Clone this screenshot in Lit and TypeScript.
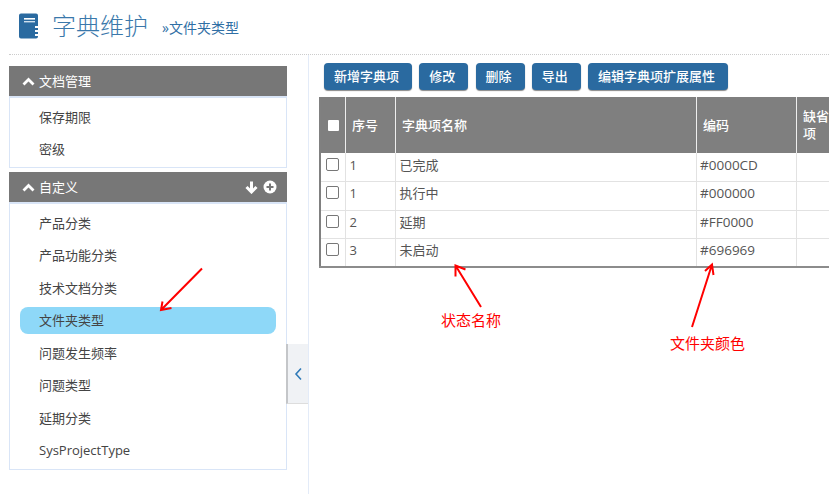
import { LitElement, html, css, svg, unsafeCSS } from "lit";
import { customElement } from "lit/decorators.js";

const FONT = unsafeCSS(`"Open Sans", "Noto Sans CJK SC", sans-serif`);

const chevUp = html`<svg class="chev" viewBox="0 0 13 9" width="13" height="9"><path d="M1.5 7.5 L6.5 2.5 L11.5 7.5" fill="none" stroke="#fff" stroke-width="2.8"/></svg>`;

const rows = [
  ["1", "已完成", "#0000CD"],
  ["1", "执行中", "#000000"],
  ["2", "延期", "#FF0000"],
  ["3", "未启动", "#696969"],
];

@customElement("app-root")
export class AppRoot extends LitElement {
  static styles = css`
    :host { display: block; width: 829px; height: 494px; overflow: hidden; position: relative; background: #fff; font-family: ${FONT}; font-size: 13px; color: #444; }
    .head { height: 55px; box-sizing: border-box; margin-left: 9px; display: flex; align-items: flex-start; border-bottom: 1px dotted #ccc; position: relative; }
    .logo { position: absolute; left: 10px; top: 12.5px; }
    .title { margin-left: 43px; margin-top: 8px; font-size: 24px; line-height: 36px; color: #3a78ab; font-weight: 300; }
    .sub { margin-left: 14px; margin-top: 16px; font-size: 14px; line-height: 24px; color: #2f6fa5; }
    .main { display: flex; height: 439px; }
    .side { width: 309px; box-sizing: border-box; border-right: 1px solid #e3ebf8; padding: 11px 21px 0 9px; flex: none; position: relative; }
    .phead { height: 30px; background: #777; color: #fff; display: flex; align-items: center; padding: 0 10px 0 13px; line-height: 20px; }
    .chev { margin-right: 4px; }
    .spacer { flex: 1; }
    .tools { display: flex; gap: 5px; align-items: center; }
    .pbody { border: 1px solid #d9e5f7; border-top-width: 2px; padding: 5.5px 10px 4px; margin-bottom: 4px; }
    .pbody.last { padding-bottom: 5px; }
    .item { height: 27px; line-height: 27px; padding-left: 19px; border-radius: 8px; color: #444; }
    .item + .item { margin-top: 5.5px; }
    .item.sel { background: #8ed8f8; }
    .collapse { position: absolute; left: 286px; top: 289px; width: 22px; height: 60px; background: #f0f2f5; border-left: 2px solid #c4c6c9; border-bottom: 1px solid #ddd; box-sizing: border-box; display: flex; align-items: center; justify-content: center; }
    .content { flex: 1; min-width: 0; padding: 8px 0 0 10px; overflow: hidden; }
    .btns { display: flex; gap: 7.25px; margin-left: 5px; height: 27px; }
    .btn { background: #2a6aa0; color: #fff; font-size: 13px; line-height: 27px; padding: 0 13px 0 10px; border-radius: 4px; box-shadow: 0 1px 1px #888; white-space: nowrap; font-weight: 500; }
    .tbl { margin-top: 7px; width: 561px; border-collapse: collapse; table-layout: fixed; border-left: 2px solid #808080; border-bottom: 2px solid #8c8c8c; }
    th { background: #7f7f7f; color: #fff; font-weight: 500; font-size: 13px; text-align: left; height: 56px; padding: 0 0 0 6.5px; line-height: 17px; border-left: 1px solid #eee; }
    th:first-child { border-left: 0; padding: 0; }
    td { box-sizing: border-box; height: 28.5px; padding: 0 0 5px 4px; line-height: 20px; border-left: 1px solid #e2e2e2; border-bottom: 1px solid #e2e2e2; color: #555; font-size: 13px; }
    td:first-child { border-left: 0; padding: 0 0 5px 5px; }
    td.code { font-size: 13.5px; padding-left: 3.5px; }
    tr:last-child td { border-bottom: 0; }
    .cb { display: block; box-sizing: border-box; width: 13px; height: 13px; border: 1px solid #777; border-radius: 2px; background: #fff; margin-top: -1px; }
    .hcb { display: block; width: 11px; height: 11px; background: #fff; border-radius: 1px; margin-left: 7px; }
    .overlay { position: absolute; left: 0; top: 0; pointer-events: none; }
    .note { position: absolute; color: #f00; font-size: 15px; line-height: 20px; }
  `;

  render() {
    const items1 = ["保存期限", "密级"];
    const items2 = ["产品分类", "产品功能分类", "技术文档分类", "文件夹类型", "问题发生频率", "问题类型", "延期分类", "SysProjectType"];
    return html`
      <div class="head">
        <svg class="logo" width="20" height="26" viewBox="0 0 20 26">
          <path d="M2 0.5H17a2 2 0 0 1 2 2V23.5a2 2 0 0 1-2 2H2a2 2 0 0 1-2-2V2.5a2 2 0 0 1 2-2Z" fill="#2a6aa0"/>
          <rect x="5" y="5" width="11" height="1.6" fill="#fff"/><rect x="5" y="8" width="11" height="1.4" fill="#cfe0ee"/>
          <g fill="#fff"><rect x="16" y="13" width="3" height="2"/><rect x="16" y="17" width="3" height="2"/><rect x="16" y="21" width="3" height="2"/></g>
        </svg>
        <div class="title">字典维护</div>
        <div class="sub">»文件夹类型</div>
      </div>
      <div class="main">
        <div class="side">
          <div class="phead">${chevUp}文档管理</div>
          <div class="pbody">${items1.map((t) => html`<div class="item">${t}</div>`)}</div>
          <div class="phead">${chevUp}自定义<span class="spacer"></span>
            <span class="tools">
              <svg width="13" height="13" viewBox="0 0 13 13"><path d="M6.5 0.5V11M1.5 6L6.5 11L11.5 6" fill="none" stroke="#fff" stroke-width="3"/></svg>
              <svg width="14" height="14" viewBox="0 0 14 14"><circle cx="7" cy="7" r="6.5" fill="#fff"/><path d="M3.5 7H10.5M7 3.5V10.5" stroke="#777" stroke-width="2"/></svg>
            </span>
          </div>
          <div class="pbody last">${items2.map((t, i) => html`<div class="item ${i === 3 ? "sel" : ""}">${t}</div>`)}</div>
          <div class="collapse"><svg width="9" height="14" viewBox="0 0 9 14"><path d="M7 1.5L2 7L7 12.5" fill="none" stroke="#2f7ab8" stroke-width="1.6"/></svg></div>
        </div>
        <div class="content">
          <div class="btns">
            ${["新增字典项", "修改", "删除", "导出", "编辑字典项扩展属性"].map((b) => html`<div class="btn">${b}</div>`)}
          </div>
          <table class="tbl">
            <colgroup><col style="width:25px"/><col style="width:50px"/><col style="width:301px"/><col style="width:100px"/><col style="width:85px"/></colgroup>
            <thead><tr><th><span class="hcb"></span></th><th>序号</th><th>字典项名称</th><th>编码</th><th>缺省<br/>项</th></tr></thead>
            <tbody>${rows.map((r) => html`<tr><td><span class="cb"></span></td><td>${r[0]}</td><td>${r[1]}</td><td class="code">${r[2]}</td><td></td></tr>`)}</tbody>
          </table>
        </div>
      </div>
      <svg class="overlay" width="829" height="494" viewBox="0 0 829 494">
        ${svg`<g fill="none" stroke="#f00" stroke-width="2">
          <path d="M202 268.5L161 310M162.5 301.5L161 310L171.5 308"/>
          <path d="M481 307L455.5 265.5M455.5 276.5L455.5 265.5L465.5 269.5"/>
          <path d="M692 327L712 264.5M705 271L712 264.5L713.5 275"/>
        </g>`}
      </svg>
      <div class="note" style="left:441px;top:310px">状态名称</div>
      <div class="note" style="left:670px;top:333px">文件夹颜色</div>
    `;
  }
}
